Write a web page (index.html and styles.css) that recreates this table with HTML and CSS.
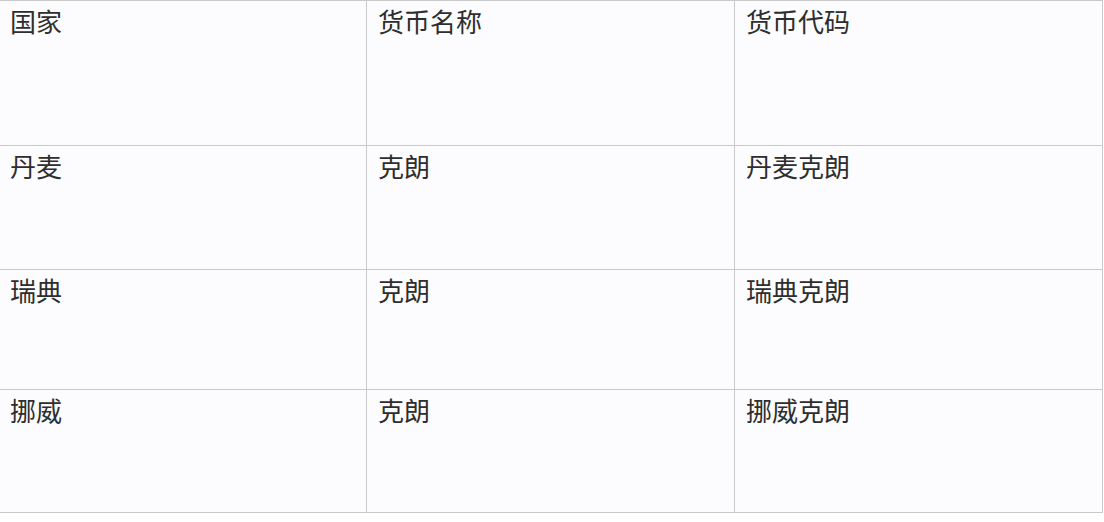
FILE: index.html
```html
<!DOCTYPE html>
<html lang="zh">
<head>
<meta charset="utf-8">
<link rel="stylesheet" href="styles.css">
</head>
<body>
<div class="table">
  <div class="row row-1">
    <div class="cell">国家</div>
    <div class="cell">货币名称</div>
    <div class="cell">货币代码</div>
  </div>
  <div class="row row-2">
    <div class="cell">丹麦</div>
    <div class="cell">克朗</div>
    <div class="cell">丹麦克朗</div>
  </div>
  <div class="row row-3">
    <div class="cell">瑞典</div>
    <div class="cell">克朗</div>
    <div class="cell">瑞典克朗</div>
  </div>
  <div class="row row-4">
    <div class="cell">挪威</div>
    <div class="cell">克朗</div>
    <div class="cell">挪威克朗</div>
  </div>
</div>
</body>
</html>
```
FILE: styles.css
```css
html, body {
  margin: 0;
  padding: 0;
  background: #ffffff;
}
body {
  font-family: "Noto Sans CJK SC", "Noto Sans", sans-serif;
  color: #2e2e2e;
}
.table {
  width: 1103px;
  background: #fcfbfd;
  border-top: 1px solid #c9c9c9;
}
.row {
  display: grid;
  grid-template-columns: 367px 368px 368px;
  border-bottom: 1px solid #c9c9c9;
}
.row-1 { height: 144px; }
.row-2 { height: 123px; }
.row-3 { height: 119px; }
.row-4 { height: 122px; }
.cell {
  font-size: 26px;
  line-height: 30px;
  padding: 5px 11px 0 11px;
  border-right: 1px solid #c9c9c9;
}
.cell:first-child {
  padding-left: 10px;
}
```
